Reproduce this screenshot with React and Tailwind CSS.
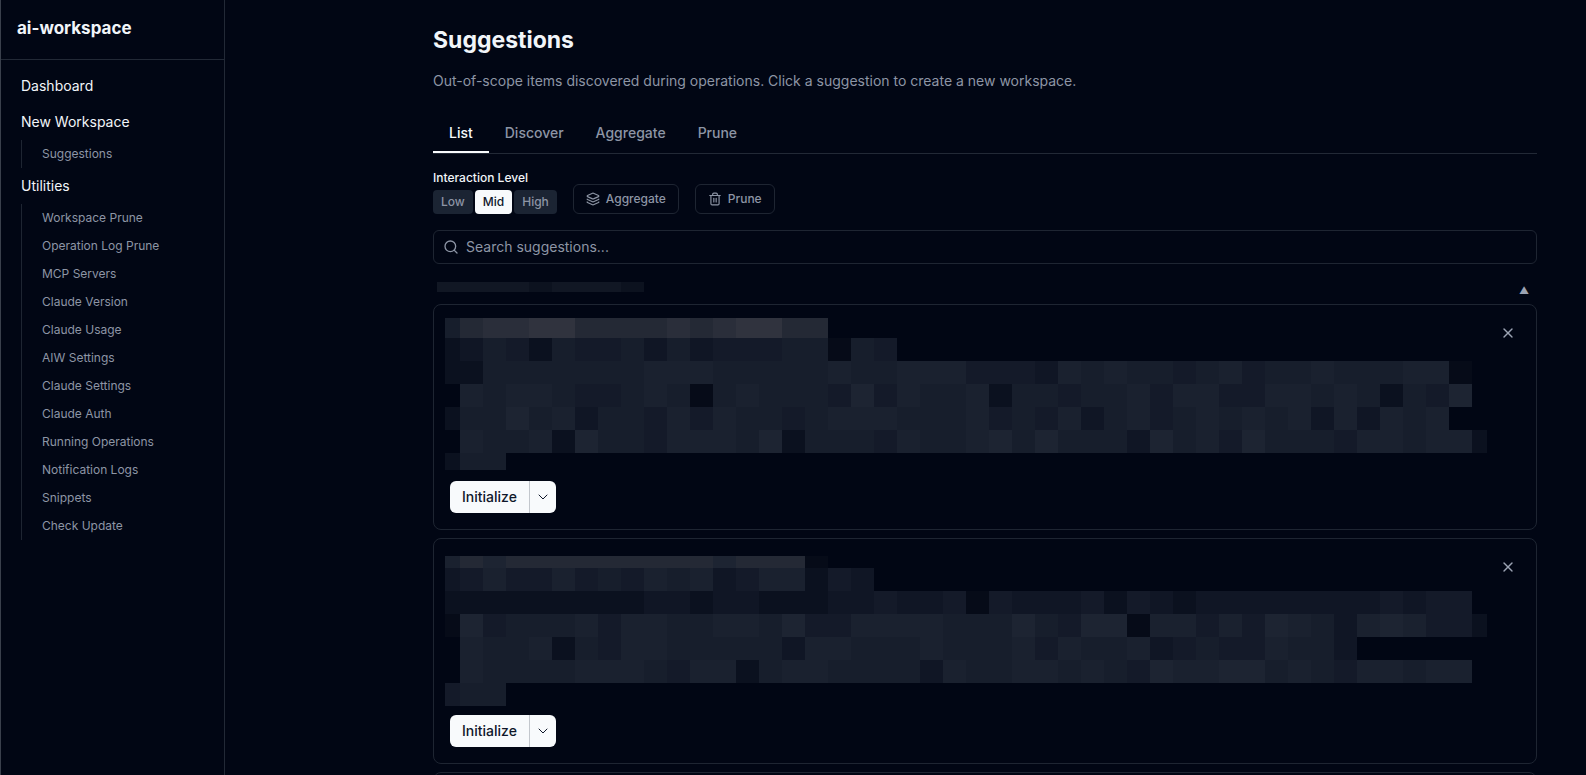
import React, { useState } from 'react';
import { ChevronDown, Layers, Search, Trash2, X } from 'lucide-react';

const utilities = [
  'Workspace Prune',
  'Operation Log Prune',
  'MCP Servers',
  'Claude Version',
  'Claude Usage',
  'AIW Settings',
  'Claude Settings',
  'Claude Auth',
  'Running Operations',
  'Notification Logs',
  'Snippets',
  'Check Update',
];

const tabs = ['List', 'Discover', 'Aggregate', 'Prune'];
const levels = ['Low', 'Mid', 'High'];

// One character per mosaic block, "." is empty, "1" is darkest, "a" is lightest
const shades = {
  '.': 'transparent',
  1: '#060b18',
  2: '#0b111f',
  3: '#101625',
  4: '#141a29',
  5: '#171e2c',
  6: '#1a212f',
  7: '#1d2432',
  8: '#242935',
  9: '#2a2e3a',
  a: '#30333e',
};

const suggestions = [
  {
    id: 1,
    pad: 'pt-[13px]',
    title: 'h-5',
    last: 'h-[17px]',
    rows: [
      '5899aa8888989aa88',
      '23542544535344455154',
      '225555555666555556556664443656554564556555661',
      '.65665445651565554746556255455646644665652547',
      '25575635546465545666555645463564565656363656.',
      '.65562755466657255546556757555375647555466566' + '2',
      '255',
    ],
  },
  {
    id: 2,
    pad: 'pt-[17px]',
    title: 'h-3',
    last: 'h-[23px]',
    rows: [
      '68788888888878881',
      '3464464546563466243',
      '222222222332332223343341433342432333333334344',
      '1745556466556657446666555754771664647653676442',
      '.655625466555553665556555646556345446553',
      '.65555666546625665555365566565476677565466566',
      '455',
    ],
  },
];

function Mosaic({ item }) {
  return (
    <div className={`min-w-0 flex-1 overflow-hidden ${item.pad}`} aria-hidden="true">
      {item.rows.map((row, i) => (
        <div
          key={i}
          className={`flex ${i === 0 ? item.title : i === item.rows.length - 1 ? item.last : 'h-[23px]'}`}
        >
          {row.split('').map((shade, j) => (
            <span
              key={j}
              className={`shrink-0 ${j === 0 || j === 45 ? 'w-[15px]' : 'w-[23px]'}`}
              style={{ backgroundColor: shades[shade] }}
            />
          ))}
        </div>
      ))}
    </div>
  );
}

function SuggestionCard({ item }) {
  return (
    <li className="rounded-lg border border-[#1e2532] pr-4 pb-4 pl-[11px]">
      <div className="flex h-[176px] items-start">
        <Mosaic item={item} />
        <button type="button" aria-label="Dismiss" className="mt-4 p-1 text-[#9ca3b3]">
          <X size={16} />
        </button>
      </div>
      <div className="ml-[5px] flex h-8 w-fit overflow-hidden rounded-md bg-[#f8fafc] text-[#0f172a]">
        <button type="button" className="px-3 text-sm font-medium">
          Initialize
        </button>
        <button
          type="button"
          aria-label="More options"
          className="flex w-[27px] items-center justify-center border-l border-[#c3c7cd]"
        >
          <ChevronDown size={16} strokeWidth={1.5} />
        </button>
      </div>
    </li>
  );
}

function SubNav({ items }) {
  return (
    <ul className="ml-3 border-l border-[#1e2532] pl-2">
      {items.map((item) => (
        <li key={item}>
          <a href="#" className="block px-3 py-1.5 text-xs text-[#8d95a5]">
            {item}
          </a>
        </li>
      ))}
    </ul>
  );
}

function Sidebar() {
  return (
    <aside className="w-[225px] shrink-0 border-x border-r-[#222936] border-l-[#3a404c]">
      <div className="flex h-[60px] items-center border-b border-[#222936] px-4 pb-0.5">
        <span className="text-[17px] font-bold">ai-workspace</span>
      </div>
      <nav className="p-2 text-sm">
        <a href="#" className="block px-3 py-2">Dashboard</a>
        <a href="#" className="block px-3 py-2">New Workspace</a>
        <SubNav items={['Suggestions']} />
        <a href="#" className="block px-3 py-2">Utilities</a>
        <SubNav items={utilities} />
      </nav>
    </aside>
  );
}

function App() {
  const [tab, setTab] = useState('List');
  const [level, setLevel] = useState('Mid');
  const [query, setQuery] = useState('');

  return (
    <div className="flex h-screen overflow-hidden bg-[#010614] font-['Inter',sans-serif] text-[#f1f5f9]">
      <Sidebar />
      <main className="min-w-0 flex-1 overflow-hidden pt-6 pr-[49px] pl-52">
        <h1 className="text-[23px] leading-8 font-bold">Suggestions</h1>
        <p className="mt-[15px] text-sm text-[#8d95a5]">
          Out-of-scope items discovered during operations. Click a suggestion to create a new workspace.
        </p>

        <div className="mt-6 flex border-b border-[#222936]">
          {tabs.map((name) => (
            <button
              key={name}
              type="button"
              onClick={() => setTab(name)}
              className={`border-b-2 px-4 py-2 text-sm font-medium ${
                tab === name ? 'border-[#f8fafc] text-[#f8fafc]' : 'border-transparent text-[#8d95a5]'
              }`}
            >
              {name}
            </button>
          ))}
        </div>

        <div className="mt-4 flex items-end gap-4">
          <div role="group" aria-labelledby="level-label">
            <div id="level-label" className="text-xs font-medium">Interaction Level</div>
            <div className="mt-1 flex gap-0.5">
              {levels.map((name) => (
                <button
                  key={name}
                  type="button"
                  onClick={() => setLevel(name)}
                  className={`rounded px-2 py-1 text-xs font-medium ${
                    level === name ? 'bg-[#f8fafc] text-[#0f172a]' : 'bg-[#1b2433] text-[#8d95a5]'
                  }`}
                >
                  {name}
                </button>
              ))}
            </div>
          </div>
          <button
            type="button"
            className="flex h-[30px] items-center gap-1.5 rounded-md border border-[#1e2532] px-3 text-xs font-medium text-[#8d95a5]"
          >
            <Layers size={14} />
            Aggregate
          </button>
          <button
            type="button"
            className="flex h-[30px] items-center gap-1.5 rounded-md border border-[#1e2532] px-3 text-xs font-medium text-[#8d95a5]"
          >
            <Trash2 size={14} />
            Prune
          </button>
        </div>

        <label className="mt-4 flex h-[34px] items-center gap-[7px] rounded-md border border-[#1e2532] px-[9px] text-[#8d95a5]">
          <Search size={16} />
          <input
            type="text"
            aria-label="Search suggestions"
            placeholder="Search suggestions..."
            value={query}
            onChange={(e) => setQuery(e.target.value)}
            className="min-w-0 flex-1 bg-transparent text-sm outline-none placeholder:text-[#8d95a5]"
          />
        </label>

        <button
          type="button"
          aria-label="Toggle group"
          className="mt-4 mb-1 flex h-5 w-full items-start justify-between pt-0.5 pr-2 pl-1"
        >
          <span className="flex h-2.5 w-[207px]">
            <span className="w-[92px] bg-[#111724]" />
            <span className="w-[23px] bg-[#0c121f]" />
            <span className="w-[69px] bg-[#111724]" />
            <span className="flex-1 bg-[#0c121f]" />
          </span>
          <span className="text-[10px] leading-4 text-[#9ca3b3]">▲</span>
        </button>

        <ul className="space-y-2">
          {suggestions.map((item) => (
            <SuggestionCard key={item.id} item={item} />
          ))}
          <li className="h-56 rounded-lg border border-[#1e2532]" />
        </ul>
      </main>
    </div>
  );
}

export default App;
